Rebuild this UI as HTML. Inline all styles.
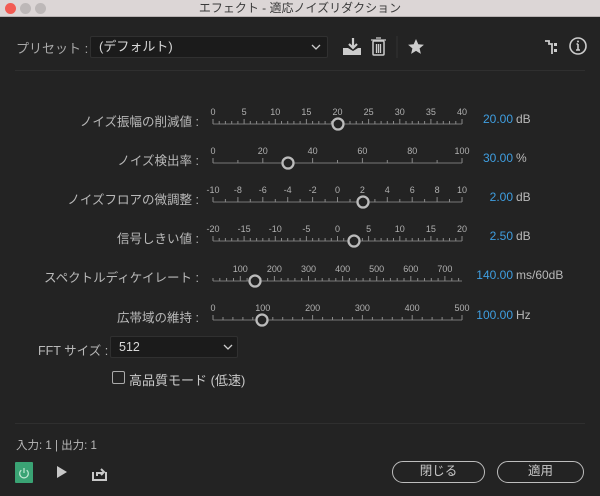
<!DOCTYPE html>
<html><head><meta charset="utf-8">
<style>
*{margin:0;padding:0;box-sizing:border-box}
body{width:600px;height:496px;background:#232323;font-family:"Liberation Sans","Noto Sans CJK JP",sans-serif;color:#b9b9b9;position:relative;overflow:hidden}
.abs{position:absolute}
#title{left:0;top:0;width:600px;height:17px;background:#dcd6d6;border-bottom:1px solid #b8b2b2;text-align:center;font-size:12px;line-height:17px;color:#3a3a3a}
.dot{width:11px;height:11px;border-radius:50%;top:3px;background:#bdb8b8}
.lbl{font-size:12.5px;text-align:right;width:199px;left:0;white-space:nowrap}
.val{font-size:12px;left:420px;width:93px;text-align:right;color:#3f9ee0}
.unit{font-size:12px;left:516px;color:#b9b9b9}
.dd{background:#1b1b1b;border:1px solid #303030;border-radius:2px;color:#d8d8d8;font-size:13px;padding-left:8px;line-height:20px}
.btn{border:1.5px solid #bdbdbd;border-radius:11px;height:22px;font-size:12.5px;text-align:center;line-height:19px;color:#c8c8c8}
</style></head><body>
<div id="title" class="abs">エフェクト - 適応ノイズリダクション</div>
<div class="abs dot" style="left:5px;background:#f25b53"></div>
<div class="abs dot" style="left:20px"></div>
<div class="abs dot" style="left:35px"></div>

<div class="abs" style="left:16px;top:38px;font-size:13px;color:#a9a9a9">プリセット :</div>
<div class="abs dd" style="left:90px;top:36px;width:238px;height:22px">(デフォルト)</div>
<svg class="abs" style="left:310px;top:42px" width="12" height="10"><path d="M2 3l4 4 4-4" stroke="#ccc" stroke-width="1.3" fill="none"/></svg>
<svg class="abs" style="left:340px;top:36px" width="260" height="22">
<path d="M13 2v9M9 8l4 4 4-4" stroke="#ccc" stroke-width="2.2" fill="none"/>
<path d="M3 12h5l5 3 5-3h3v7H3z" fill="#ccc"/>
<rect x="33" y="5" width="11" height="14" rx="1" fill="none" stroke="#ccc" stroke-width="1.5"/>
<path d="M31 4h15M36 2h5M36.5 8v9M38.5 8v9M40.5 8v9" stroke="#ccc" stroke-width="1.3"/>
<line x1="57" y1="0" x2="57" y2="22" stroke="#333"/>
<path d="M76 3l2.3 5.2 5.6.5-4.3 3.7 1.3 5.5-4.9-3-4.9 3 1.3-5.5-4.3-3.7 5.6-.5z" fill="#ccc"/>
<path d="M205 5h4v3h3v10" stroke="#ccc" stroke-width="1.8" fill="none"/>
<rect x="214" y="7" width="3" height="3" fill="#ccc"/><rect x="214" y="13" width="3" height="3" fill="#ccc"/>
<circle cx="238" cy="10" r="8" fill="none" stroke="#ccc" stroke-width="1.6"/>
<path d="M238 8v6M236 14h4M236.5 8h1.5" stroke="#ccc" stroke-width="1.6"/><circle cx="238" cy="5.5" r="1" fill="#ccc"/>
</svg>
<div class="abs" style="left:15px;top:70px;width:570px;height:1px;background:#2f2f2f"></div>

<svg id="sl" class="abs" style="left:0;top:0" width="600" height="340"></svg>

<div class="abs lbl" style="top:111px">ノイズ振幅の削減値 :</div>
<div class="abs lbl" style="top:150px">ノイズ検出率 :</div>
<div class="abs lbl" style="top:189px">ノイズフロアの微調整 :</div>
<div class="abs lbl" style="top:228px">信号しきい値 :</div>
<div class="abs lbl" style="top:267px">スペクトルディケイレート :</div>
<div class="abs lbl" style="top:307px">広帯域の維持 :</div>

<div class="abs val" style="top:112px">20.00</div><div class="abs unit" style="top:112px">dB</div>
<div class="abs val" style="top:151px">30.00</div><div class="abs unit" style="top:151px">%</div>
<div class="abs val" style="top:190px">2.00</div><div class="abs unit" style="top:190px">dB</div>
<div class="abs val" style="top:229px">2.50</div><div class="abs unit" style="top:229px">dB</div>
<div class="abs val" style="top:268px">140.00</div><div class="abs unit" style="top:268px">ms/60dB</div>
<div class="abs val" style="top:308px">100.00</div><div class="abs unit" style="top:308px">Hz</div>

<div class="abs" style="left:38px;top:340px;font-size:12.5px">FFT サイズ :</div>
<div class="abs dd" style="left:110px;top:336px;width:128px;height:22px;font-size:12.5px">512</div>
<svg class="abs" style="left:222px;top:342px" width="12" height="10"><path d="M2 3l4 4 4-4" stroke="#ccc" stroke-width="1.3" fill="none"/></svg>
<div class="abs" style="left:112px;top:371px;width:13px;height:13px;border:1.5px solid #aaa;border-radius:2px"></div>
<div class="abs" style="left:129px;top:370px;font-size:13px;color:#c8c8c8">高品質モード (低速)</div>

<div class="abs" style="left:15px;top:423px;width:570px;height:1px;background:#2f2f2f"></div>
<div class="abs" style="left:16px;top:437px;font-size:11.5px">入力: 1 | 出力: 1</div>
<div class="abs" style="left:15px;top:462px;width:18px;height:21px;background:#3aa374;border-radius:1px"></div>
<svg class="abs" style="left:15px;top:462px" width="18" height="21"><path d="M6.3 8.2a4.3 4.3 0 1 0 5.4 0" stroke="#bfe7d3" stroke-width="1.2" fill="none"/><path d="M9 6v5" stroke="#bfe7d3" stroke-width="1.2"/></svg>
<svg class="abs" style="left:55px;top:463px" width="60" height="20">
<path d="M2 3l10 6-10 6z" fill="#c8c8c8"/>
<path d="M38 9v8h13v-8" stroke="#c8c8c8" stroke-width="2" fill="none"/>
<path d="M42 13v-3h6M46 6l3 3-3 3" stroke="#c8c8c8" stroke-width="2" fill="none"/>
</svg>
<div class="abs btn" style="left:392px;top:461px;width:93px">閉じる</div>
<div class="abs btn" style="left:497px;top:461px;width:87px">適用</div>

<script>
var s=document.getElementById('sl'),h='';
var X0=213,X1=462;
function row(y,labs,lo,hi,minor,knob){
 var sc=function(v){return X0+(v-lo)/(hi-lo)*(X1-X0)};
 h+='<line x1="'+X0+'" y1="'+y+'" x2="'+X1+'" y2="'+y+'" stroke="#777" stroke-width="1"/>';
 for(var v=lo;v<=hi+1e-6;v+=minor){var x=sc(v).toFixed(1);var maj=labs.some(function(l){return Math.abs(l-v)<1e-6});
  h+='<line x1="'+x+'" y1="'+(y-(maj?5:3))+'" x2="'+x+'" y2="'+y+'" stroke="#888" stroke-width="1"/>';}
 labs.forEach(function(l){h+='<text x="'+sc(l).toFixed(1)+'" y="'+(y-9)+'" font-size="9" fill="#b0b0b0" text-anchor="middle" font-family="Liberation Sans">'+l+'</text>';});
 h+='<circle cx="'+knob+'" cy="'+y+'" r="5.5" fill="#232323" stroke="#bbb" stroke-width="2.3"/>';
}
row(124,[0,5,10,15,20,25,30,35,40],0,40,1,338);
row(163,[0,20,40,60,80,100],0,100,10,288);
row(202,[-10,-8,-6,-4,-2,0,2,4,6,8,10],-10,10,1,363);
row(241,[-20,-15,-10,-5,0,5,10,15,20],-20,20,1,354);
(function(){var y=281;var lo=20,hi=750;var sc=function(v){return X0+(v-lo)/(hi-lo)*(X1-X0)};
 h+='<line x1="'+X0+'" y1="'+y+'" x2="'+X1+'" y2="'+y+'" stroke="#777"/>';
 for(var v=20;v<=740;v+=20){var x=sc(v).toFixed(1);var maj=v%100==0;h+='<line x1="'+x+'" y1="'+(y-(maj?5:3))+'" x2="'+x+'" y2="'+y+'" stroke="#888"/>';}
 [100,200,300,400,500,600,700].forEach(function(l){h+='<text x="'+sc(l).toFixed(1)+'" y="'+(y-9)+'" font-size="9" fill="#b0b0b0" text-anchor="middle" font-family="Liberation Sans">'+l+'</text>';});
 h+='<circle cx="255" cy="'+y+'" r="5.5" fill="#232323" stroke="#bbb" stroke-width="2.3"/>';})();
row(320,[0,100,200,300,400,500],0,500,20,262);
s.innerHTML=h;
</script>
</body></html>
